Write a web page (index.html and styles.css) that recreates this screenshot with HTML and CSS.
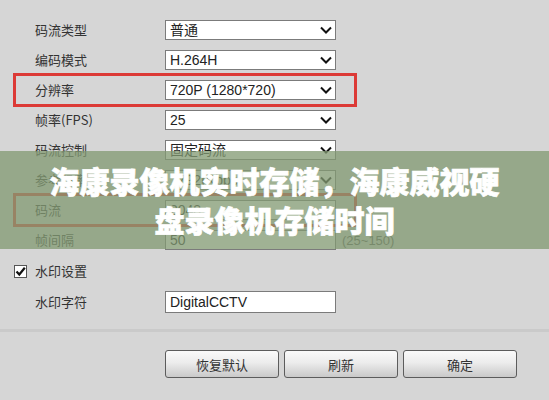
FILE: index.html
```html
<!DOCTYPE html>
<html lang="zh-CN">
<head>
<meta charset="utf-8">
<link rel="stylesheet" href="styles.css">
</head>
<body>
<div class="page">
  <div class="form">
    <div class="row">
      <span class="label">码流类型</span>
      <div class="select"><span class="val">普通</span><svg class="chev" width="12" height="8" viewBox="0 0 12 8"><path d="M1 1.5 L6 6.5 L11 1.5" fill="none" stroke="#111" stroke-width="2"/></svg></div>
    </div>
    <div class="row">
      <span class="label">编码模式</span>
      <div class="select"><span class="val">H.264H</span><svg class="chev" width="12" height="8" viewBox="0 0 12 8"><path d="M1 1.5 L6 6.5 L11 1.5" fill="none" stroke="#111" stroke-width="2"/></svg></div>
    </div>
    <div class="row hl">
      <span class="label">分辨率</span>
      <div class="select"><span class="val">720P (1280*720)</span><svg class="chev" width="12" height="8" viewBox="0 0 12 8"><path d="M1 1.5 L6 6.5 L11 1.5" fill="none" stroke="#111" stroke-width="2"/></svg></div>
    </div>
    <div class="row">
      <span class="label">帧率(FPS)</span>
      <div class="select"><span class="val">25</span><svg class="chev" width="12" height="8" viewBox="0 0 12 8"><path d="M1 1.5 L6 6.5 L11 1.5" fill="none" stroke="#111" stroke-width="2"/></svg></div>
    </div>
    <div class="row">
      <span class="label">码流控制</span>
      <div class="select"><span class="val">固定码流</span><svg class="chev" width="12" height="8" viewBox="0 0 12 8"><path d="M1 1.5 L6 6.5 L11 1.5" fill="none" stroke="#111" stroke-width="2"/></svg></div>
    </div>
    <div class="row">
      <span class="label">参考码率</span>
      <div class="select"><span class="val">1792(Kbps)</span><svg class="chev" width="12" height="8" viewBox="0 0 12 8"><path d="M1 1.5 L6 6.5 L11 1.5" fill="none" stroke="#111" stroke-width="2"/></svg></div>
    </div>
    <div class="row hl">
      <span class="label">码流</span>
      <div class="select"><span class="val">2048</span></div>
    </div>
    <div class="row">
      <span class="label">帧间隔</span>
      <div class="select"><span class="val">50</span></div>
      <span class="hint">(25~150)</span>
    </div>
    <div class="row check-row">
      <span class="checkbox"><svg width="11" height="11" viewBox="0 0 11 11"><path d="M1.5 5.5 L4.3 8.5 L9.8 1.8" fill="none" stroke="#111" stroke-width="2.2"/></svg></span>
      <span class="label">水印设置</span>
    </div>
    <div class="row">
      <span class="label">水印字符</span>
      <div class="select text-input"><span class="val">DigitalCCTV</span></div>
    </div>
  </div>
  <div class="separator"></div>
  <div class="buttons">
    <div class="btn">恢复默认</div>
    <div class="btn">刷新</div>
    <div class="btn">确定</div>
  </div>
  <div class="banner">
    <div class="banner-line">海康录像机实时存储，海康威视硬</div>
    <div class="banner-line">盘录像机存储时间</div>
  </div>
</div>
</body>
</html>
```

FILE: styles.css
```css
* { box-sizing: border-box; }
html, body {
  margin: 0;
  padding: 0;
}
body {
  width: 549px;
  height: 400px;
  overflow: hidden;
  background: #d6d6d6;
  font-family: "Noto Sans CJK SC", "Liberation Sans", sans-serif;
  color: #3a3a3a;
}
.page {
  position: relative;
  width: 549px;
  height: 400px;
}
.form {
  padding-top: 15px;
}
.row {
  display: flex;
  align-items: center;
  height: 30px;
  width: 340px;
  margin-left: 15px;
  padding-left: 20px;
}
.row.hl {
  outline: 3px solid #dc3a36;
  outline-offset: -1px;
}
.label {
  width: 130px;
  flex-shrink: 0;
  font-size: 13px;
  line-height: 16px;
  color: #333;
  white-space: nowrap;
}
.select {
  width: 171px;
  height: 20px;
  flex-shrink: 0;
  background: #fff;
  border: 1px solid #7b7b7b;
  display: flex;
  align-items: center;
  justify-content: space-between;
  padding: 0 3px 0 4px;
}
.val {
  font-family: "Liberation Sans", "Noto Sans CJK SC", sans-serif;
  font-size: 14px;
  line-height: 16px;
  color: #222;
  white-space: nowrap;
}
.chev {
  display: block;
}
.hint {
  flex-shrink: 0;
  margin-left: 6px;
  font-family: "Liberation Sans", sans-serif;
  font-size: 13px;
  color: #555;
  white-space: nowrap;
}
.check-row {
  height: 32px;
  margin-left: 14px;
  padding-left: 0;
}
.check-row .label {
  width: auto;
}
.checkbox {
  width: 13px;
  height: 13px;
  margin-right: 8px;
  border: 1px solid #555;
  background: #fff;
  display: flex;
  align-items: center;
  justify-content: center;
}
.checkbox svg { display: block; }
.text-input {
  height: 22px;
}
.separator {
  margin-top: 12px;
  height: 3px;
  background: #cacaca;
}
.buttons {
  display: flex;
  gap: 5px;
  padding-left: 165px;
  padding-top: 18px;
}
.btn {
  width: 114px;
  height: 28px;
  border: 1px solid #5c5c5c;
  border-radius: 3px;
  background: linear-gradient(#fafafa, #ececec 45%, #c9c9c9);
  display: flex;
  align-items: center;
  justify-content: center;
  font-size: 13px;
  color: #333;
}
.banner {
  position: absolute;
  left: 0;
  top: 151px;
  width: 549px;
  height: 98px;
  background: rgba(130, 154, 115, 0.76);
  display: flex;
  flex-direction: column;
  align-items: center;
  justify-content: center;
}
.banner-line {
  font-family: "Noto Sans CJK SC", sans-serif;
  font-weight: 900;
  font-size: 30px;
  line-height: 39px;
  color: #fff;
  -webkit-text-stroke: 0.7px #fff;
  white-space: nowrap;
}
```
